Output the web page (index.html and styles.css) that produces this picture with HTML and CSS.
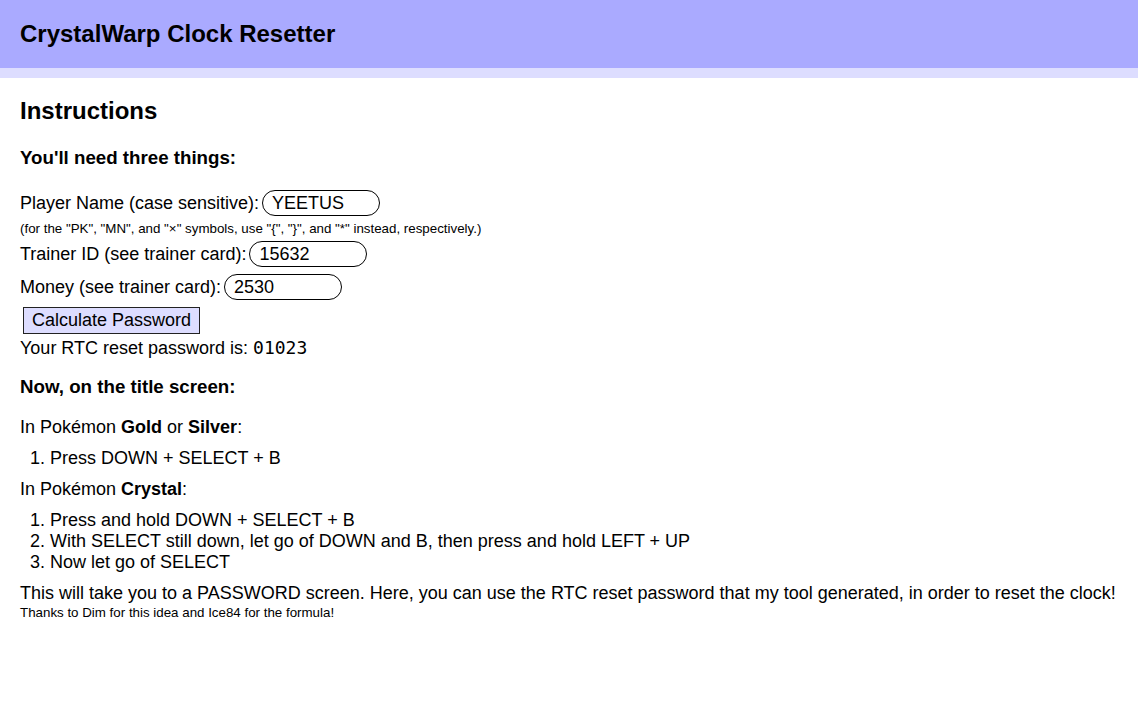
FILE: index.html
```html
<!DOCTYPE html>
<html lang="en">
<head>
<meta charset="utf-8">
<title>CrystalWarp Clock Resetter</title>
<link rel="stylesheet" href="styles.css">
</head>
<body>
<header class="site-header">
  <h1 class="site-title">CrystalWarp Clock Resetter</h1>
</header>
<main class="content">
  <h2 class="section-title">Instructions</h2>
  <h3 class="sub-title first">You'll need three things:</h3>
  <form class="rtc-form">
    <div class="field-row"><label for="name">Player Name (case sensitive):</label><input id="name" class="pill-input" type="text" value="YEETUS"></div>
    <div class="note">(for the "PK", "MN", and "×" symbols, use "{", "}", and "*" instead, respectively.)</div>
    <div class="field-row"><label for="tid">Trainer ID (see trainer card):</label><input id="tid" class="pill-input" type="text" value="15632"></div>
    <div class="field-row"><label for="money">Money (see trainer card):</label><input id="money" class="pill-input" type="text" value="2530"></div>
    <div class="button-row"><button type="button" class="calc-btn">Calculate Password</button></div>
    <div class="result">Your RTC reset password is: <span class="code">01023</span></div>
  </form>
  <h3 class="sub-title second">Now, on the title screen:</h3>
  <p class="para">In Pokémon <b>Gold</b> or <b>Silver</b>:</p>
  <ol class="steps">
    <li>Press DOWN + SELECT + B</li>
  </ol>
  <p class="para">In Pokémon <b>Crystal</b>:</p>
  <ol class="steps">
    <li>Press and hold DOWN + SELECT + B</li>
    <li>With SELECT still down, let go of DOWN and B, then press and hold LEFT + UP</li>
    <li>Now let go of SELECT</li>
  </ol>
  <p class="para last">This will take you to a PASSWORD screen. Here, you can use the RTC reset password that my tool generated, in order to reset the clock!</p>
  <div class="thanks">Thanks to Dim for this idea and Ice84 for the formula!</div>
</main>
</body>
</html>
```

FILE: styles.css
```css
html, body {
  margin: 0;
  padding: 0;
  background: #fff;
}
body {
  font-family: "Liberation Sans", Arial, sans-serif;
  font-size: 18px;
  line-height: 21px;
  color: #000;
}
.site-header {
  background: #aaaaff;
  border-bottom: 10px solid #ddddff;
  padding: 20px;
}
.site-title {
  margin: 0;
  font-size: 24px;
  line-height: 28px;
  font-weight: bold;
}
.content {
  padding: 0 20px;
}
.section-title {
  margin: 19px 0 0;
  font-size: 24px;
  line-height: 28px;
  font-weight: bold;
}
.sub-title {
  margin: 0;
  font-size: 18.72px;
  line-height: 22px;
  font-weight: bold;
}
.sub-title.first {
  margin-top: 22px;
}
.sub-title.second {
  margin-top: 17px;
}
.rtc-form {
  margin-top: 21px;
}
.field-row {
  display: flex;
  align-items: center;
  height: 26px;
  margin-bottom: 7px;
}
.field-row:first-child {
  margin-bottom: 5px;
}
.pill-input {
  box-sizing: border-box;
  width: 118px;
  height: 26px;
  margin: 0 0 0 3px;
  padding: 0 9px;
  border: 1px solid #000;
  border-radius: 13px;
  font-family: "Liberation Sans", Arial, sans-serif;
  font-size: 18px;
  color: #000;
  background: #fff;
  outline: none;
}
.note {
  font-size: 13.33px;
  line-height: 15px;
  margin-bottom: 5px;
}
.button-row {
  display: flex;
}
.calc-btn {
  box-sizing: border-box;
  margin: 0 0 0 3px;
  height: 27px;
  padding: 0 8px;
  border: 1px solid #222;
  border-radius: 0;
  background: #ddddff;
  font-family: "Liberation Sans", Arial, sans-serif;
  font-size: 18px;
  color: #000;
}
.result {
  margin-top: 3px;
}
.code {
  font-family: "DejaVu Sans Mono", "Liberation Mono", monospace;
  font-size: 18px;
}
.para {
  margin: 19px 0 0;
}
.steps {
  margin: 10px 0 0;
  padding-left: 30px;
}
.steps + .para {
  margin-top: 10px;
}
.para.last {
  margin-top: 10px;
}
.thanks {
  font-size: 13.33px;
  line-height: 15px;
  margin-top: 1px;
}
```
